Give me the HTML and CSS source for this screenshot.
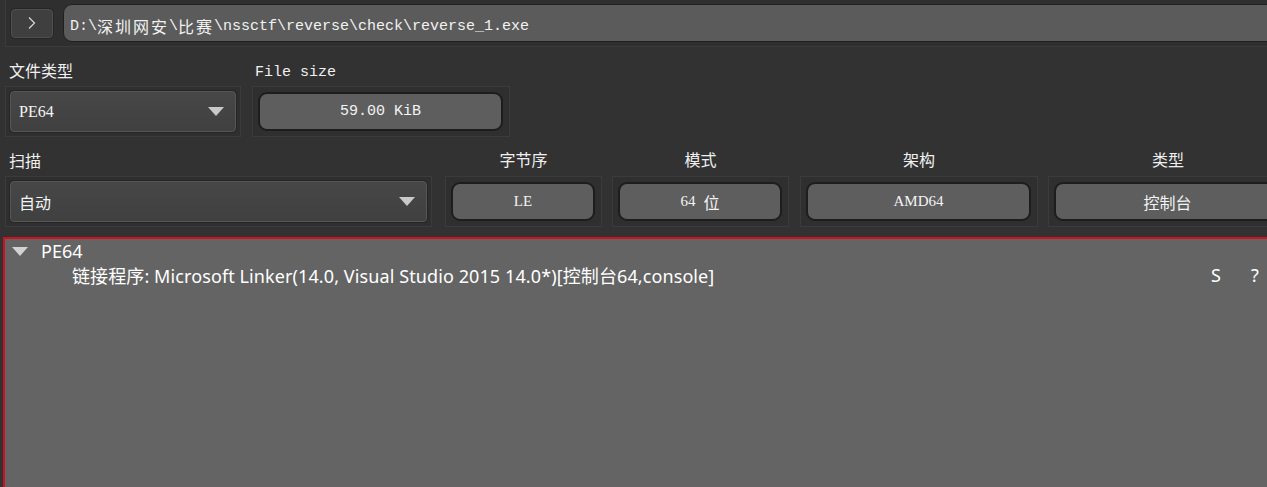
FILE: index.html
```html
<!DOCTYPE html>
<html lang="zh">
<head>
<meta charset="utf-8">
<title>Detect It Easy</title>
<link rel="stylesheet" href="styles.css">
</head>
<body>
<div class="app">
  <div class="frame top">
    <button class="go"><svg width="10" height="14" viewBox="0 0 10 14"><path d="M2 1.5 L7.5 7 L2 12.5" fill="none" stroke="#d8d8d8" stroke-width="1.2"/></svg></button>
    <div class="path">D:\<span class="cj">深圳网安</span>\<span class="cj">比赛</span>\nssctf\reverse\check\reverse_1.exe</div>
  </div>

  <div class="row row1">
    <div class="col c-type">
      <div class="label cjk">文件类型</div>
      <div class="frame"><div class="combo"><span class="serif">PE64</span><i class="arrow"></i></div></div>
    </div>
    <div class="col c-size">
      <div class="label mono">File size</div>
      <div class="frame"><div class="btn mono">59.00 KiB</div></div>
    </div>
  </div>

  <div class="row row2">
    <div class="col c-scan">
      <div class="label cjk">扫描</div>
      <div class="frame"><div class="combo"><span class="cjk">自动</span><i class="arrow"></i></div></div>
    </div>
    <div class="col c-endian">
      <div class="label cjk center">字节序</div>
      <div class="frame"><div class="btn serif">LE</div></div>
    </div>
    <div class="col c-mode">
      <div class="label cjk center">模式</div>
      <div class="frame"><div class="btn serif">64<span class="cjk gap">位</span></div></div>
    </div>
    <div class="col c-arch">
      <div class="label cjk center">架构</div>
      <div class="frame"><div class="btn serif">AMD64</div></div>
    </div>
    <div class="col c-kind">
      <div class="label cjk center">类型</div>
      <div class="frame"><div class="btn cjk">控制台</div></div>
    </div>
  </div>

  <div class="tree">
    <div class="node">
      <i class="tri"></i><span>PE64</span>
    </div>
    <div class="leaf">
      <span class="leaf-text">链接程序: Microsoft Linker(14.0, Visual Studio 2015 14.0*)[控制台64,console]</span>
      <span class="flag s">S</span>
      <span class="flag q">?</span>
    </div>
  </div>
</div>
</body>
</html>
```

FILE: styles.css
```css
* { box-sizing: border-box; }
html, body { margin: 0; padding: 0; }
body {
  background: #323232;
  color: #f0f0f0;
  width: 1267px;
  height: 487px;
  overflow: hidden;
  font-family: "Noto Sans", "Noto Sans CJK SC", sans-serif;
}
.app { display: flex; flex-direction: column; overflow: hidden; }

.cjk { font-family: "Noto Sans CJK SC", sans-serif; }
.mono { font-family: "Liberation Mono", "Noto Sans CJK SC", monospace; }
.serif { font-family: "Liberation Serif", "Noto Sans CJK SC", serif; }

.frame {
  border: 1px solid #3b3b3b;
  background: #2f2f2f;
  padding: 4px;
  display: flex;
}

.top {
  margin-left: 5px;
  width: 1275px;
  flex-shrink: 0;
  height: 47px;
  padding: 3px 0 4px 5px;
  align-items: center;
  gap: 10px;
  border-top: none;
}
.go {
  width: 42px;
  height: 29px;
  margin-top: 1px;
  background: #3f3f3f;
  border: 1px solid #4f4f4f;
  border-radius: 4px;
  box-shadow: 0 0 0 1px #262626;
  display: flex;
  align-items: center;
  justify-content: center;
  padding: 0;
}
.path {
  flex: 1;
  height: 38px;
  background: #5b5b5b;
  border: 1px solid #202020;
  border-radius: 9px;
  font-family: "Liberation Mono", monospace;
  font-size: 15px;
  color: #f2f2f2;
  display: flex;
  align-items: center;
  padding: 7px 0 0 6px;
  white-space: pre;
}
.path .cj {
  font-family: "Noto Sans CJK SC", sans-serif;
  font-size: 16px;
  letter-spacing: 2px;
}

.row { display: flex; }
.col { display: flex; flex-direction: column; flex-shrink: 0; }
.label {
  height: 39px;
  display: flex;
  align-items: center;
  padding: 6px 0 0 4px;
  font-size: 16px;
  color: #f0f0f0;
}
.label.mono { font-size: 15px; padding-top: 11px; }
.label.center { justify-content: center; padding-left: 0; padding-top: 4px; }

.row1 .c-type { margin-left: 5px; width: 236px; }
.row1 .c-size { margin-left: 11px; width: 258px; }
.row1 .c-size .label { padding-left: 3px; }

.row2 .c-scan { margin-left: 5px; width: 427px; }
.row2 .c-endian { margin-left: 13px; width: 157px; }
.row2 .c-mode { margin-left: 10px; width: 177px; }
.row2 .c-arch { margin-left: 11px; width: 238px; }
.row2 .c-kind { margin-left: 10px; width: 240px; }

.col .frame { height: 51px; }

.combo {
  flex: 1;
  height: 41px;
  background: linear-gradient(#474747, #404040);
  border: 1px solid #565656;
  border-radius: 4px;
  box-shadow: 0 0 0 1px #262626;
  display: flex;
  align-items: center;
  justify-content: space-between;
  padding: 0 11px 0 8px;
  font-size: 16px;
  color: #f4f4f4;
}
.combo .serif { font-size: 16px; }
.arrow {
  width: 0; height: 0;
  border-left: 8px solid transparent;
  border-right: 8px solid transparent;
  border-top: 9px solid #c9c9c9;
}

.btn {
  flex: 1;
  margin: 1px 2px 1px 1px;
  height: 39px;
  background: #5e5e5e;
  border: 2px solid #1d1d1d;
  border-radius: 9px;
  display: flex;
  align-items: center;
  justify-content: center;
  font-size: 15px;
  color: #f4f4f4;
  white-space: pre;
}
.btn.cjk { font-size: 16px; }
.btn .cjk { font-size: 16px; }
.btn .gap { margin-left: 8px; }

.tree {
  margin: 10px 0 0 3px;
  width: 1270px;
  height: 260px;
  flex-shrink: 0;
  border: 2px solid #d0101c;
  border-right: none;
  background: #646464;
  padding-top: 0;
  font-size: 18px;
  color: #ffffff;
}
.node {
  display: flex;
  align-items: center;
  height: 24px;
  padding-left: 7px;
}
.tri {
  width: 0; height: 0;
  border-left: 8px solid transparent;
  border-right: 8px solid transparent;
  border-top: 9px solid #d2d2d2;
  margin-right: 13px;
}
.leaf {
  display: flex;
  align-items: center;
  height: 24px;
  padding-left: 67px;
}
.leaf-text { width: 1139px; white-space: pre; letter-spacing: 0.1px; }
.flag.q { margin-left: 30px; }
```
